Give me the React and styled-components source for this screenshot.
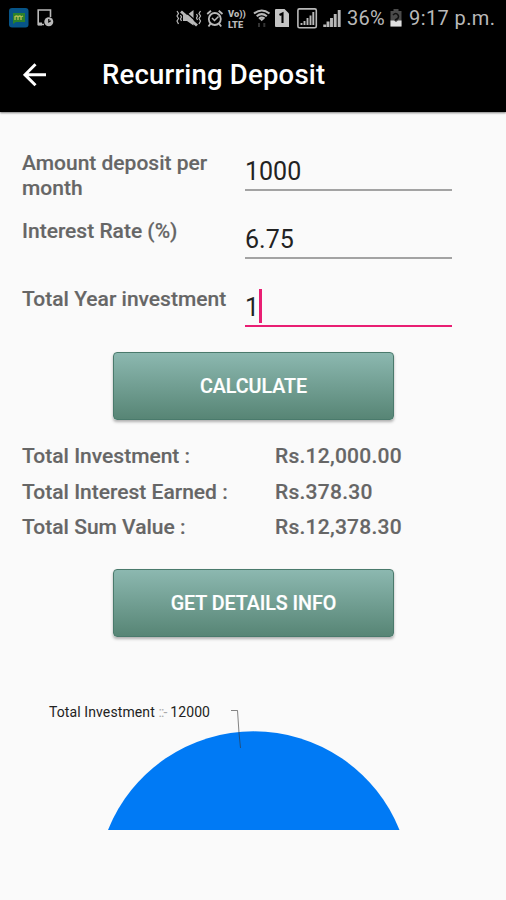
import React from "react"
import styled, { createGlobalStyle } from "styled-components"

const GlobalStyle = createGlobalStyle`
  * {
    box-sizing: border-box;
  }

  body {
    margin: 0;
    background-color: #fafafa;
    font-family: Roboto, sans-serif;
  }
`
const Screen = styled.div`
  width: 506px;
  height: 900px;
  display: flex;
  flex-direction: column;
  overflow: hidden;
  background-color: #fafafa;
`
const StatusBar = styled.div`
  flex: none;
  display: flex;
  align-items: center;
  height: 36px;
  padding-left: 9px;
  background-color: #000;
  color: #b9b9b9;
`
const StatusIcon = styled.svg`
  flex: none;
  display: block;
  margin-left: ${props => props.$gap || 0}px;
`
const StatusText = styled.span`
  flex: none;
  width: ${props => props.$width}px;
  margin-left: ${props => props.$gap}px;
  font-size: 20px;
  line-height: 36px;
  letter-spacing: ${props => props.$spacing || 0}px;
  white-space: nowrap;
`
const Volte = styled.div`
  flex: none;
  display: flex;
  flex-direction: column;
  width: 18px;
  margin-left: 4px;
  padding-top: 1px;
  font-size: 9.3px;
  font-weight: 900;
  line-height: 11px;
  white-space: nowrap;
`
const Toolbar = styled.header`
  flex: none;
  display: flex;
  align-items: center;
  height: 76px;
  padding: 1px 0 0 23px;
  background-color: #000;
  color: #fff;
  box-shadow: 0 1px 2px rgba(0, 0, 0, 0.5);
`
const Title = styled.h1`
  margin: 0 0 0 56px;
  font-size: 27.5px;
  font-weight: 500;
  line-height: 36px;
  letter-spacing: 0.2px;
`
const Content = styled.main`
  display: flex;
  flex-direction: column;
`
const Form = styled.form`
  display: flex;
  flex-direction: column;
  padding: 39px 0 0 22px;
`
const Field = styled.div`
  display: flex;
  height: 68px;
`
const Label = styled.label`
  width: 223px;
  padding-right: 10px;
  color: #666;
  font-size: 21px;
  font-weight: 500;
  line-height: 24.5px;
  -webkit-text-stroke: 0.15px #666;
`
const Input = styled.div`
  display: flex;
  align-items: center;
  width: 207px;
  height: 40px;
  padding-top: 2px;
  color: #222;
  font-size: 25px;
  border-bottom: 2px solid ${props => (props.$focused ? "#e91e73" : "#a3a3a3")};
`
const Caret = styled.span`
  width: 2.5px;
  height: 34px;
  margin-bottom: 2px;
  background-color: #e91e73;
`
const Button = styled.button`
  align-self: center;
  width: 281px;
  height: 68px;
  margin-top: ${props => props.$top}px;
  margin-left: 1px;
  padding: 0;
  color: #fff;
  font-family: inherit;
  font-size: 19.7px;
  font-weight: 500;
  letter-spacing: -0.05px;
  -webkit-text-stroke: 0.2px #fff;
  border: 1.5px solid #4a7a6c;
  border-radius: 4px;
  background: linear-gradient(#8cb8b0, #578575);
  box-shadow: 0 2px 3px rgba(0, 0, 0, 0.3);
`
const Results = styled.dl`
  display: grid;
  grid-template-columns: 253px auto;
  grid-auto-rows: 35.7px;
  margin: 18px 0 0 22px;
  color: #666;
  font-size: 21px;
  font-weight: 500;
  line-height: 36px;
  -webkit-text-stroke: 0.15px #666;
`
const Name = styled.dt`
  margin: 0;
`
const Value = styled.dd`
  margin: 0;
  letter-spacing: 0.25px;
`
const Chart = styled.div`
  display: flex;
  flex-direction: column;
  margin-top: 67px;
`
const Legend = styled.div`
  display: flex;
  height: 27px;
  padding-left: 49px;
  color: #222;
  font-size: 14px;
  line-height: 17px;
`
const LegendText = styled.span`
  width: 182px;
  letter-spacing: 0.1px;
  white-space: pre;
`
const Faint = styled.span`
  color: #aaa;
  letter-spacing: -0.8px;
`
const Leader = styled.svg`
  position: relative;
  z-index: 1;
  display: block;
  overflow: visible;
`
const Pie = styled.svg`
  display: block;
`

const results = [
  ["Total Investment :", "Rs.12,000.00"],
  ["Total Interest Earned :", "Rs.378.30"],
  ["Total Sum Value :", "Rs.12,378.30"],
]

const AppIcon = () => (
  <StatusIcon width="20" height="20" viewBox="0 0 20 20">
    <rect width="19.5" height="19.5" rx="3" fill="#075487" />
    <path d="M4 5H16V14H7L4 16Z" fill="#2c812b" />
    <path
      d="M6 12V8M6 9Q7.5 7 9 9V12M9 9Q11 7 12 9V12M12 9L14 8"
      fill="none"
      stroke="#b5bd55"
      strokeWidth="1.3"
    />
  </StatusIcon>
)

const TabletIcon = () => (
  <StatusIcon $gap={8} width="17" height="18" viewBox="0 0 17 18">
    <path
      d="M13.5 8V1H1.2V15.5H7"
      fill="none"
      stroke="currentColor"
      strokeWidth="1.6"
    />
    <path d="M1 13.5H5V16.5H1Z" fill="currentColor" />
    <circle cx="11.8" cy="12.8" r="4.5" fill="currentColor" />
    <path d="M11.8 10V13L13.8 11.8" fill="none" stroke="#000" strokeWidth="1.2" />
  </StatusIcon>
)

const MuteIcon = () => (
  <StatusIcon $gap={122} width="26" height="18" viewBox="0 0 26 18">
    <path d="M7 6H11L17.5 1V16.5L11 12H7Z" fill="currentColor" />
    <path d="M8 1.5L22 14" stroke="#000" strokeWidth="1.3" />
    <path d="M5 2.5L21 16.5" stroke="currentColor" strokeWidth="2.8" />
    <path
      d="M1 2L2.5 4.5L1 7L2.5 9.5L1 12L2.5 15M4.5 6L5.5 8L4.5 10L5.5 12M24.5 2L23 4.5L24.5 7L23 9.5L24.5 12L23 15M20.5 5L21.5 7L20.5 9L21.5 11"
      fill="none"
      stroke="currentColor"
      strokeWidth="1.2"
    />
  </StatusIcon>
)

const AlarmIcon = () => (
  <StatusIcon $gap={4} width="18" height="19" viewBox="0 0 18 19">
    <g fill="none" stroke="currentColor" strokeWidth="1.8">
      <circle cx="8.8" cy="10" r="6" />
      <path d="M1.2 5L5 1.7M16.5 5L12.7 1.7M4.6 14.5L2.5 17.5M13 14.5L15.2 17.5" />
      <path d="M6 9L8.5 11.5L12.5 7.5" strokeWidth="1.5" />
    </g>
  </StatusIcon>
)

const WifiIcon = () => (
  <StatusIcon $gap={7} width="18" height="19" viewBox="0 0 18 19">
    <g fill="none" stroke="currentColor" strokeWidth="2.1">
      <path d="M1 4.5Q8.7-1.5 16.5 4.5" />
      <path d="M3.7 7.3Q8.7 3 13.8 7.3" />
      <path d="M6 9.7Q8.7 7.5 11.5 9.7" />
    </g>
    <path d="M6.7 10L8.7 12.3L10.8 10Z" fill="currentColor" />
    <path d="M6 14V18M11.3 14V18" stroke="#333" strokeWidth="2" />
  </StatusIcon>
)

const SimIcon = () => (
  <StatusIcon $gap={4} width="15" height="18" viewBox="0 0 15 18">
    <path d="M1 0H9.5L14 4.5V18H1Q0 18 0 17V1Q0 0 1 0Z" fill="#c4c4c4" />
    <path d="M4.5 6L7.5 4.5V14" fill="none" stroke="#000" strokeWidth="2.1" />
  </StatusIcon>
)

const BoxedSignalIcon = () => (
  <StatusIcon $gap={7} width="21" height="21" viewBox="0 0 21 21">
    <rect
      x="0.9"
      y="0.9"
      width="18.4"
      height="18.8"
      rx="1.5"
      fill="none"
      stroke="currentColor"
      strokeWidth="1.6"
    />
    <path
      d="M4.5 17V15M7.5 17V13M10.5 17V10M13.5 17V7.5M16.3 17V4"
      stroke="currentColor"
      strokeWidth="1.9"
    />
  </StatusIcon>
)

const SignalIcon = () => (
  <StatusIcon $gap={5} width="19" height="19" viewBox="0 0 19 19">
    <path
      d="M1.7 18V15.5M5 18V12.5M8.5 18V9M12.2 18V5M16.2 18V1"
      stroke="currentColor"
      strokeWidth="2.9"
    />
  </StatusIcon>
)

const BatteryIcon = () => (
  <StatusIcon $gap={4} width="12" height="18" viewBox="0 0 12 18">
    <path d="M3.5 0H8.5V2H11.5V17.5H0.5V2H3.5Z" fill="#4b4b4b" />
    <path d="M0.5 11.5H4L6 13L8 11.5H11.5V17.5H0.5Z" fill="#e0e0e0" />
    <path d="M3 6Q6 3 8 6T5 11" fill="none" stroke="#111" strokeWidth="1.5" />
  </StatusIcon>
)

const App = () => {
  return (
    <Screen>
      <GlobalStyle />
      <StatusBar>
        <AppIcon />
        <TabletIcon />
        <MuteIcon />
        <AlarmIcon />
        <Volte>
          <span>Vo))</span>
          <span>LTE</span>
        </Volte>
        <WifiIcon />
        <SimIcon />
        <BoxedSignalIcon />
        <SignalIcon />
        <StatusText $gap={5} $width={39} $spacing={0.2}>
          36%
        </StatusText>
        <BatteryIcon />
        <StatusText $gap={7} $width={90} $spacing={0.4}>
          9:17 p.m.
        </StatusText>
      </StatusBar>
      <Toolbar>
        <svg width="23" height="24" viewBox="0 0 23 24">
          <path
            d="M12.5 1.3L2 11.8L12.5 22.3M2 11.8H23"
            fill="none"
            stroke="#fff"
            strokeWidth="3"
          />
        </svg>
        <Title>Recurring Deposit</Title>
      </Toolbar>
      <Content>
        <Form>
          <Field>
            <Label>Amount deposit per month</Label>
            <Input>1000</Input>
          </Field>
          <Field>
            <Label>Interest Rate (%)</Label>
            <Input>6.75</Input>
          </Field>
          <Field>
            <Label>Total Year investment</Label>
            <Input $focused>
              1<Caret />
            </Input>
          </Field>
        </Form>
        <Button $top={-3}>CALCULATE</Button>
        <Results>
          {results.map(([name, value]) => (
            <React.Fragment key={name}>
              <Name>{name}</Name>
              <Value>{value}</Value>
            </React.Fragment>
          ))}
        </Results>
        <Button $top={24}>GET DETAILS INFO</Button>
        <Chart>
          <Legend>
            <LegendText>
              Total Investment <Faint>::-</Faint> 12000
            </LegendText>
            <Leader width="10" height="27">
              <path
                d="M0 6.5H6.5L8 29L9.5 44"
                fill="none"
                stroke="#333"
                strokeOpacity="0.6"
                strokeWidth="1"
              />
            </Leader>
          </Legend>
          <Pie width="506" height="99" viewBox="0 731 506 99">
            <path d="M108 830A157 157 0 0 1 399.5 830Z" fill="#007af5" />
          </Pie>
        </Chart>
      </Content>
    </Screen>
  )
}

export default App
